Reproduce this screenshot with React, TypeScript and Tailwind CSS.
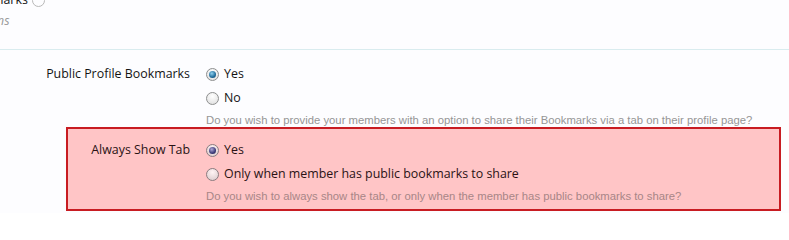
import React from 'react';

const Radio = ({ checked, tinted }: { checked?: boolean; tinted?: boolean }) => (
  <span
    className={`relative inline-flex h-[13px] w-[13px] shrink-0 items-center justify-center rounded-full border ${
      tinted
        ? 'border-[#8a7c80] bg-[radial-gradient(circle_at_50%_30%,#fff4f4,#d8c8ca)]'
        : 'border-[#8e8f8f] bg-[radial-gradient(circle_at_50%_30%,#ffffff,#dcdcdc)]'
    }`}
  >
    {checked && (
      <span
        className={`h-[7px] w-[7px] rounded-full ${
          tinted
            ? 'bg-[radial-gradient(circle_at_40%_35%,#b0a8d8,#3b3a78_60%,#241f4a)]'
            : 'bg-[radial-gradient(circle_at_40%_35%,#8fd0ee,#1f6b9a_60%,#0d3f63)]'
        }`}
      />
    )}
  </span>
);

const Option = ({ label, checked, tinted }: { label: string; checked?: boolean; tinted?: boolean }) => (
  <label className="flex h-[24px] items-center gap-[5px]">
    <Radio checked={checked} tinted={tinted} />
    <span className={`text-[12.4px] ${tinted ? 'text-[#2a1214]' : 'text-[#141414]'}`}>{label}</span>
  </label>
);

const Row = ({
  label,
  options,
  hint,
  tinted,
}: {
  label: string;
  options: { label: string; checked?: boolean }[];
  hint: string;
  tinted?: boolean;
}) => (
  <div className="flex">
    <div className={`w-[192px] shrink-0 pr-[2px] pt-[3px] text-right text-[12.4px] ${tinted ? 'text-[#2a1214]' : 'text-[#141414]'}`}>
      <div className="flex h-[18px] items-center justify-end">{label}</div>
    </div>
    <div className="ml-[14px] flex flex-col">
      {options.map((o, i) => (
        <Option key={i} label={o.label} checked={o.checked} tinted={tinted} />
      ))}
      <p className={`mt-[3px] text-[11.3px] leading-[14px] font-['Liberation_Sans',sans-serif] ${tinted ? 'text-[#a88587]' : 'text-[#969696]'}`}>
        {hint}
      </p>
    </div>
  </div>
);

export default function App() {
  return (
    <div className="h-[213px] w-[789px] overflow-hidden bg-[#fdfdff] font-['Open_Sans',sans-serif]">
      {/* cut-off section above */}
      <div className="h-[50px] overflow-hidden border-b border-[#d9ecef]">
        <div className="-mt-[9px] -ml-[8px] flex items-center gap-[4px]">
          <span className="text-[12.4px] text-[#141414]">marks</span>
          <span className="h-[13px] w-[13px] rounded-full border border-[#b8b8b8]" />
        </div>
        <div className="-ml-[3px] mt-[2px] text-[12.4px] italic text-[#9a9a9a]">ns</div>
      </div>

      <div className="pt-[12px]">
        <Row
          label="Public Profile Bookmarks"
          options={[{ label: 'Yes', checked: true }, { label: 'No' }]}
          hint="Do you wish to provide your members with an option to share their Bookmarks via a tab on their profile page?"
        />
      </div>

      <div className="ml-[66px] mr-[8px] mt-[0px] border-2 border-[#c81c22] bg-[#ffc5c6] pb-[6px] pt-[9px]">
        <div className="-ml-[68px]">
          <Row
            tinted
            label="Always Show Tab"
            options={[{ label: 'Yes', checked: true }, { label: 'Only when member has public bookmarks to share' }]}
            hint="Do you wish to always show the tab, or only when the member has public bookmarks to share?"
          />
        </div>
      </div>
    </div>
  );
}
